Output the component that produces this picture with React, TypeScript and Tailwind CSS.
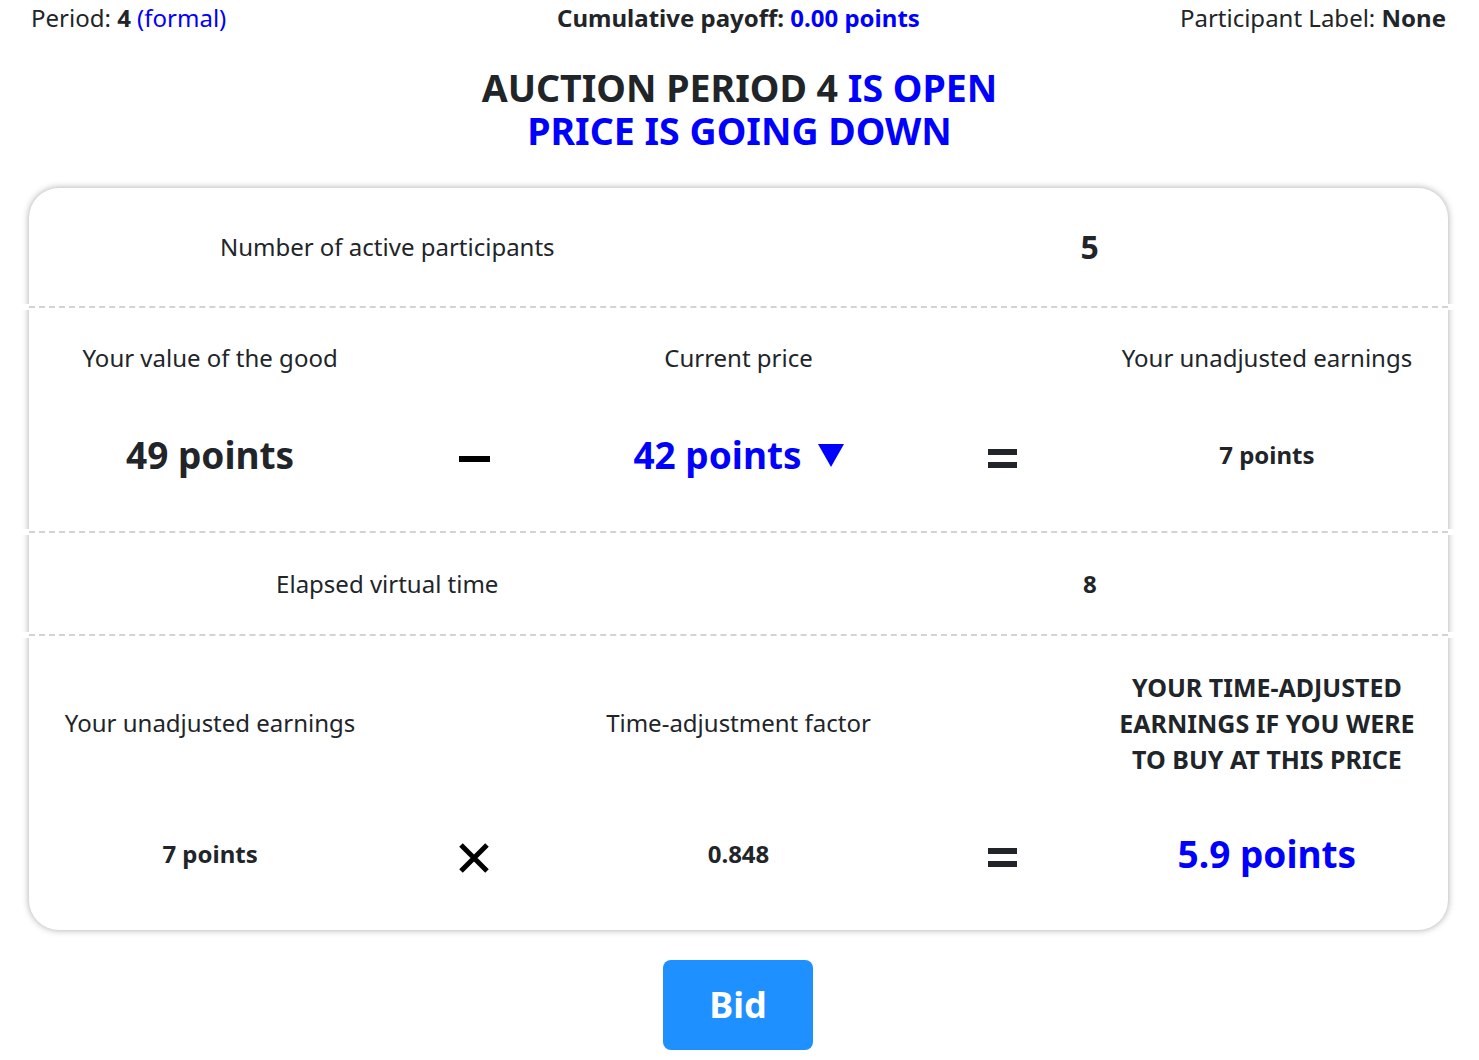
import React from "react";

const BLUE = "text-[#0000ff]";

function Minus() {
  return <div aria-label="minus" className="mt-[7px] w-[31px] h-[6px] bg-black" />;
}

function Equals() {
  return (
    <div aria-label="equals" className="mt-[7px] flex flex-col gap-[7px]">
      <div className="w-[29px] h-[6px] bg-[#212529]" />
      <div className="w-[29px] h-[6px] bg-[#212529]" />
    </div>
  );
}

function Times() {
  return (
    <svg aria-label="times" className="mt-[7px]" width="32" height="30" viewBox="0 0 32 30">
      <path d="M3 2 L29 28 M29 2 L3 28" stroke="#000" strokeWidth="5" />
    </svg>
  );
}

function DownArrow() {
  return (
    <svg aria-label="down" width="26" height="23" viewBox="0 0 26 23" className="ml-[16px]">
      <polygon points="0,0 26,0 13,23" fill="#0000ff" />
    </svg>
  );
}

// dashed separator; white band hides the card shadow like the original
function Divider() {
  return (
    <div className="relative z-10 -mx-[10px] bg-white px-[10px] py-[2px]">
      <div className="border-t-2 border-dashed border-[#d3d3d3]" />
    </div>
  );
}

function Cell({ children }: { children: React.ReactNode }) {
  return <div className="flex items-center justify-center whitespace-nowrap">{children}</div>;
}

export default function App() {
  return (
    <div className="min-h-screen bg-white text-[#212529] font-['Noto_Sans',sans-serif]">
      {/* Top info bar */}
      <div className="grid grid-cols-3 pl-[31px] pr-[33px] text-[24px] leading-[36px]">
        <div>
          Period: <b>4</b> <span className={BLUE}>(formal)</span>
        </div>
        <div className="text-center font-bold">
          Cumulative payoff: <span className={BLUE}>0.00 points</span>
        </div>
        <div className="text-right">
          Participant Label: <b>None</b>
        </div>
      </div>

      {/* Headline */}
      <h1 className="mt-[30px] text-center text-[37.5px] font-bold leading-[43px]">
        AUCTION PERIOD 4 <span className={BLUE}>IS OPEN</span>
        <br />
        <span className={BLUE}>PRICE IS GOING DOWN</span>
      </h1>

      {/* Auction card */}
      <div className="ml-[29px] mr-[31px] mt-[36px] rounded-[30px] bg-white shadow-[0_0_7px_rgba(0,0,0,0.35)] text-[24px] leading-[36px]">
        <div className="grid h-[116px] grid-cols-2 px-[7px] pt-[2px]">
          <Cell>Number of active participants</Cell>
          <Cell>
            <span className="text-[32px] font-bold">5</span>
          </Cell>
        </div>

        <Divider />

        <div className="h-[219px] px-[49px]">
          <div className="grid h-[96px] grid-cols-5">
            <Cell>Your value of the good</Cell>
            <div />
            <Cell>Current price</Cell>
            <div />
            <Cell>Your unadjusted earnings</Cell>
          </div>
          <div className="grid h-[98px] grid-cols-5">
            <Cell>
              <span className="text-[37px] font-bold">49 points</span>
            </Cell>
            <Cell>
              <Minus />
            </Cell>
            <Cell>
              <span className={`text-[37px] font-bold ${BLUE}`}>42 points</span>
              <DownArrow />
            </Cell>
            <Cell>
              <Equals />
            </Cell>
            <Cell>
              <span className="font-bold">7 points</span>
            </Cell>
          </div>
        </div>

        <Divider />

        <div className="grid h-[97px] grid-cols-2 px-[7px]">
          <Cell>Elapsed virtual time</Cell>
          <Cell>
            <span className="font-bold">8</span>
          </Cell>
        </div>

        <Divider />

        <div className="h-[292px] px-[49px]">
          <div className="grid h-[170px] grid-cols-5">
            <Cell>Your unadjusted earnings</Cell>
            <div />
            <Cell>Time-adjustment factor</Cell>
            <div />
            <Cell>
              <span className="text-center text-[25px] font-bold leading-[36px]">
                YOUR TIME-ADJUSTED
                <br />
                EARNINGS IF YOU WERE
                <br />
                TO BUY AT THIS PRICE
              </span>
            </Cell>
          </div>
          <div className="grid h-[92px] grid-cols-5">
            <Cell>
              <span className="font-bold">7 points</span>
            </Cell>
            <Cell>
              <Times />
            </Cell>
            <Cell>
              <span className="font-bold">0.848</span>
            </Cell>
            <Cell>
              <Equals />
            </Cell>
            <Cell>
              <span className={`text-[37px] font-bold ${BLUE}`}>5.9 points</span>
            </Cell>
          </div>
        </div>
      </div>

      {/* Bid */}
      <div className="mt-[30px] flex justify-center pr-[3px]">
        <button className="h-[90px] w-[150px] rounded-[8px] bg-[#1e90ff] text-[36px] font-bold text-white">
          Bid
        </button>
      </div>
    </div>
  );
}
